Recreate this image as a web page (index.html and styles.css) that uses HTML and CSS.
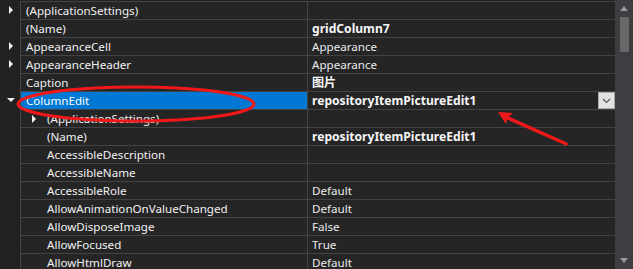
FILE: index.html
```html
<!DOCTYPE html>
<html>
<head>
<meta charset="utf-8">
<link rel="stylesheet" href="styles.css">
</head>
<body>
<div class="frame">
  <div class="grid">
    <div class="row"><div class="gutter"><span class="tri-r"></span></div><div class="name">(ApplicationSettings)</div><div class="value"></div></div>
    <div class="row"><div class="gutter"></div><div class="name">(Name)</div><div class="value bold">gridColumn7</div></div>
    <div class="row"><div class="gutter"><span class="tri-r"></span></div><div class="name">AppearanceCell</div><div class="value">Appearance</div></div>
    <div class="row"><div class="gutter"><span class="tri-r"></span></div><div class="name">AppearanceHeader</div><div class="value">Appearance</div></div>
    <div class="row"><div class="gutter"></div><div class="name">Caption</div><div class="value bold">图片</div></div>
    <div class="row"><div class="gutter"><span class="tri-d"></span></div><div class="name selected">ColumnEdit</div><div class="value bold edit"><span>repositoryItemPictureEdit1</span><span class="dd"><svg width="9" height="6" viewBox="0 0 9 6"><path d="M1 1 L4.5 4.5 L8 1" fill="none" stroke="#555" stroke-width="1.2"/></svg></span></div></div>
    <div class="row"><div class="gutter"></div><div class="name sub"><span class="tri-r sub-tri"></span>(ApplicationSettings)</div><div class="value"></div></div>
    <div class="row"><div class="gutter"></div><div class="name sub">(Name)</div><div class="value bold">repositoryItemPictureEdit1</div></div>
    <div class="row"><div class="gutter"></div><div class="name sub">AccessibleDescription</div><div class="value"></div></div>
    <div class="row"><div class="gutter"></div><div class="name sub">AccessibleName</div><div class="value"></div></div>
    <div class="row"><div class="gutter"></div><div class="name sub">AccessibleRole</div><div class="value">Default</div></div>
    <div class="row"><div class="gutter"></div><div class="name sub">AllowAnimationOnValueChanged</div><div class="value">Default</div></div>
    <div class="row"><div class="gutter"></div><div class="name sub">AllowDisposeImage</div><div class="value">False</div></div>
    <div class="row"><div class="gutter"></div><div class="name sub">AllowFocused</div><div class="value">True</div></div>
    <div class="row"><div class="gutter"></div><div class="name sub">AllowHtmlDraw</div><div class="value">Default</div></div>
  </div>
  <div class="scrollbar">
    <span class="sb-up"></span>
    <span class="sb-thumb"></span>
    <span class="sb-down"></span>
  </div>
</div>
<svg class="marks" width="633" height="269" viewBox="0 0 633 269">
  <ellipse cx="136" cy="104" rx="118" ry="17" fill="none" stroke="#f01818" stroke-width="3"/>
  <polygon points="498,112 513,113 509,116.5 568,143 567,146 507,119.5 506,124" fill="#f01818"/>
</svg>
</body>
</html>
```
FILE: styles.css
```css
html, body {
  margin: 0;
  padding: 0;
  background: #222223;
}
body {
  width: 633px;
  height: 269px;
  overflow: hidden;
  position: relative;
  font-family: "Noto Sans", "Noto Sans CJK SC", sans-serif;
  font-size: 11.6px;
  color: #f1f1f1;
}
.frame {
  display: flex;
  height: 269px;
}
.grid {
  width: 615px;
  padding-top: 1px;
  background: #222223;
}
.row {
  display: flex;
  height: 18px;
}
.gutter {
  width: 20px;
  flex: none;
  display: flex;
  align-items: center;
  justify-content: center;
  background: #222223;
}
.name, .value {
  border-top: 1px solid #434346;
  border-left: 1px solid #434346;
  background: #252526;
  height: 17px;
  line-height: 17px;
  white-space: nowrap;
  overflow: hidden;
  box-sizing: content-box;
  display: flex;
  align-items: center;
}
.name {
  width: 281px;
  padding-left: 5px;
  flex: none;
}
.name.sub {
  width: 260px;
  padding-left: 26px;
  position: relative;
}
.value {
  flex: 1;
  padding-left: 4px;
  color: #ebebeb;
}
.bold {
  font-weight: bold;
  font-size: 12.1px;
  color: #f6f6f6;
}
.selected {
  background: #0078d4;
  color: #ffffff;
}
.edit {
  justify-content: space-between;
}
.dd {
  width: 15px;
  height: 15px;
  background: #e3e3e3;
  border: 1px solid #a9a9a9;
  display: flex;
  align-items: center;
  justify-content: center;
}
.tri-r {
  width: 0;
  height: 0;
  border-top: 4px solid transparent;
  border-bottom: 4px solid transparent;
  border-left: 4px solid #f1f1f1;
  margin-left: 1px;
}
.tri-d {
  width: 0;
  height: 0;
  border-left: 4px solid transparent;
  border-right: 4px solid transparent;
  border-top: 4px solid #f1f1f1;
  margin-left: 2px;
}
.sub-tri {
  position: absolute;
  left: 11px;
  top: 5px;
  margin: 0;
}
.scrollbar {
  width: 18px;
  background: #3e3e42;
  position: relative;
}
.sb-up {
  position: absolute;
  left: 5px;
  top: 6px;
  width: 0;
  height: 0;
  border-left: 4.5px solid transparent;
  border-right: 4.5px solid transparent;
  border-bottom: 5px solid #999999;
}
.sb-down {
  position: absolute;
  left: 5px;
  top: 258px;
  width: 0;
  height: 0;
  border-left: 4.5px solid transparent;
  border-right: 4.5px solid transparent;
  border-top: 5px solid #999999;
}
.sb-thumb {
  position: absolute;
  left: 5px;
  top: 17px;
  width: 9px;
  height: 35px;
  background: #686868;
}
.marks {
  position: absolute;
  left: 0;
  top: 0;
  pointer-events: none;
}
```
